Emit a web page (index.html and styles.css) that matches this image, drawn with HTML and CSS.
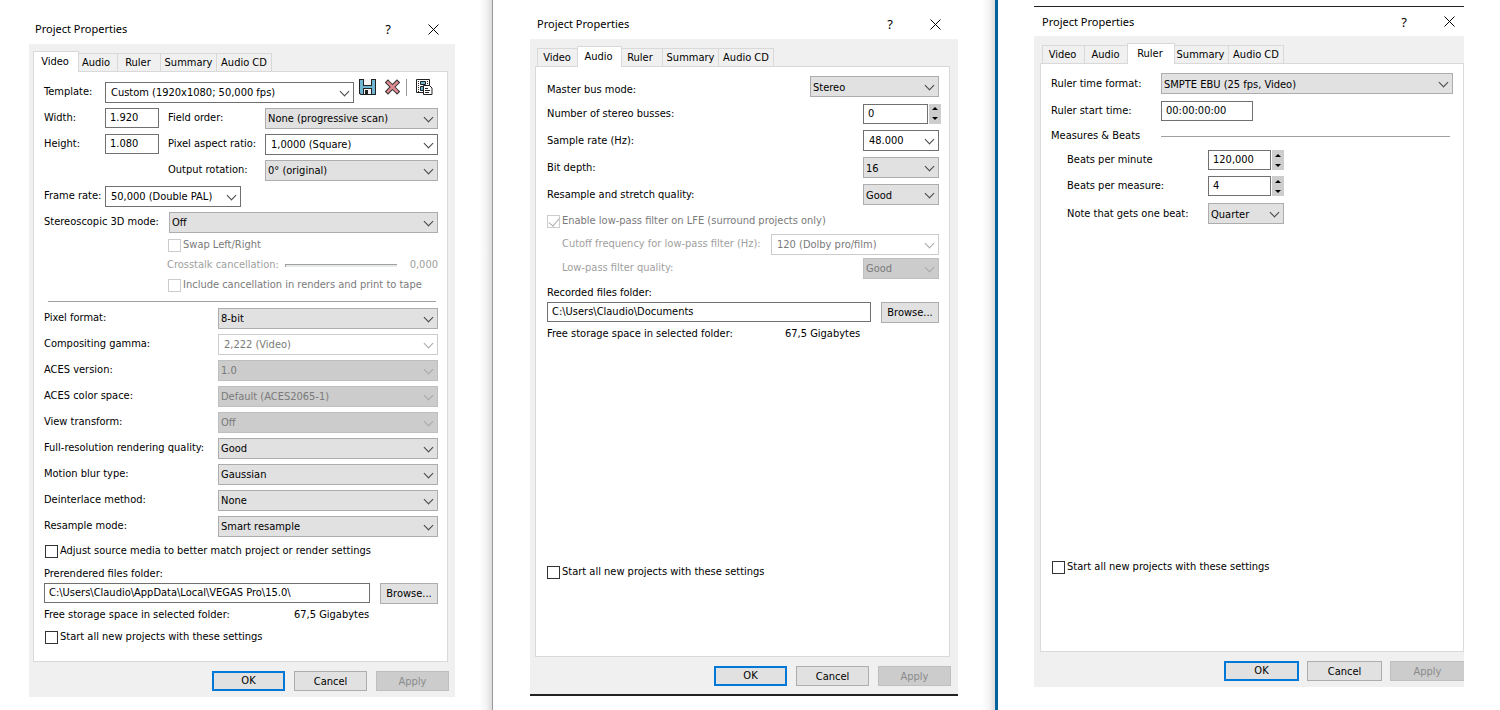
FILE: index.html
```html
<!DOCTYPE html>
<html lang="en">
<head>
<meta charset="utf-8">
<title>Project Properties</title>
<link rel="stylesheet" href="styles.css">
</head>
<body>
<main class="panes">

<section class="pane pane--video">
  <div class="dialog" role="dialog" aria-labelledby="title-video">
    <header class="titlebar">
      <h1 class="title" id="title-video">Project Properties</h1>
      <button class="title-button" type="button" aria-label="Help">?</button>
      <button class="title-button" type="button" aria-label="Close"><svg class="close" viewBox="0 0 11 11"><path d="M.5.5l10 10M10.5.5l-10 10"/></svg></button>
    </header>
    <form class="dialog-body">
      <div class="tabs" role="tablist">
        <button class="tab tab--video tab--active" type="button" role="tab" aria-selected="true">Video</button>
        <button class="tab tab--audio" type="button" role="tab">Audio</button>
        <button class="tab tab--ruler" type="button" role="tab">Ruler</button>
        <button class="tab tab--summary" type="button" role="tab">Summary</button>
        <button class="tab tab--cd" type="button" role="tab">Audio CD</button>
      </div>
      <div class="panel">
        <div class="row">
          <label class="lead" for="template">Template:</label>
          <span class="combo combo--edit grow"><select id="template"><option>Custom (1920x1080; 50,000 fps)</option></select></span>
          <span class="tools">
            <button class="tool" type="button" aria-label="Save template"><svg width="17" height="16" viewBox="0 0 17 16"><path fill="#222" d="M0 0h17v16H1.500L0 14.500z"/><path fill="#6fb5d3" d="M1 1h15v14H2l-1-1z"/><path fill="#222" d="M4 0h9v7H4zM4 9h9v7H4z"/><path fill="#f4f4f4" d="M5 0h7v6H5zM5 10h7v5H5z"/><path fill="#222" d="M6 11h3v4H6z"/></svg></button>
            <button class="tool" type="button" aria-label="Delete template"><svg width="15" height="16" viewBox="0 0 15 16"><path d="M3 3.500l9 9M12 3.500l-9 9" fill="none" stroke="#333" stroke-width="4.500" stroke-linecap="square"/><path d="M3 3.500l9 9M12 3.500l-9 9" fill="none" stroke="#dc8a90" stroke-width="2.500" stroke-linecap="square"/></svg></button>
            <span class="tool-divider"></span>
            <button class="tool" type="button" aria-label="Match media settings"><svg width="17" height="16" viewBox="0 0 17 16"><path fill="#fff" stroke="#222" d="M.5.5h13v13H.5z"/><path stroke="#222" stroke-dasharray="1 1" d="M2.500 2v11M11.500 2v4" fill="none"/><path fill="#6fb5d3" stroke="#222" d="M4.500 2.500h5v3h-5zM4.500 7.500h5v4h-5z"/><path fill="#fff" stroke="#222" d="M7.500 6.500h6l2.500 2.500v6.500H7.500z"/><path stroke="#222" d="M9 9.500h3M9 11.500h5M9 13.500h4" fill="none"/></svg></button>
          </span>
        </div>
        <div class="row">
          <label class="lead" for="width">Width:</label>
          <input class="field field--size" id="width" type="text" value="1.920">
          <label class="second" for="order">Field order:</label>
          <span class="combo grow"><select id="order"><option>None (progressive scan)</option></select></span>
        </div>
        <div class="row">
          <label class="lead" for="height">Height:</label>
          <input class="field field--size" id="height" type="text" value="1.080">
          <label class="second" for="aspect">Pixel aspect ratio:</label>
          <span class="combo combo--edit grow"><select id="aspect"><option>1,0000 (Square)</option></select></span>
        </div>
        <div class="row">
          <label class="second second--shift" for="rotation">Output rotation:</label>
          <span class="combo grow"><select id="rotation"><option>0° (original)</option></select></span>
        </div>
        <div class="row">
          <label class="lead" for="rate">Frame rate:</label>
          <span class="combo combo--edit combo--rate"><select id="rate"><option>50,000 (Double PAL)</option></select></span>
        </div>
        <div class="row">
          <label class="stereo" for="stereo">Stereoscopic 3D mode:</label>
          <span class="combo grow"><select id="stereo"><option>Off</option></select></span>
        </div>
        <div class="row row--tight indent"><label class="check check--off"><input type="checkbox" disabled>Swap Left/Right</label></div>
        <div class="row row--tight indent faint">
          <label class="crosstalk" for="crosstalk">Crosstalk cancellation:</label>
          <input class="slider" id="crosstalk" type="range" min="0" max="1" value="0" disabled>
          <output class="push" for="crosstalk">0,000</output>
        </div>
        <div class="row row--tight indent"><label class="check check--off"><input type="checkbox" disabled>Include cancellation in renders and print to tape</label></div>
        <hr class="rule">
        <div class="row"><label class="wide" for="pixel">Pixel format:</label><span class="combo grow"><select id="pixel"><option>8-bit</option></select></span></div>
        <div class="row"><label class="wide" for="gamma">Compositing gamma:</label><span class="combo combo--edit grow"><select id="gamma" disabled><option>2,222 (Video)</option></select></span></div>
        <div class="row"><label class="wide" for="aces">ACES version:</label><span class="combo grow"><select id="aces" disabled><option>1.0</option></select></span></div>
        <div class="row"><label class="wide" for="space">ACES color space:</label><span class="combo grow"><select id="space" disabled><option>Default (ACES2065-1)</option></select></span></div>
        <div class="row"><label class="wide" for="view">View transform:</label><span class="combo grow"><select id="view" disabled><option>Off</option></select></span></div>
        <div class="row"><label class="wide" for="quality">Full-resolution rendering quality:</label><span class="combo grow"><select id="quality"><option>Good</option></select></span></div>
        <div class="row"><label class="wide" for="blur">Motion blur type:</label><span class="combo grow"><select id="blur"><option>Gaussian</option></select></span></div>
        <div class="row"><label class="wide" for="deint">Deinterlace method:</label><span class="combo grow"><select id="deint"><option>None</option></select></span></div>
        <div class="row"><label class="wide" for="resample">Resample mode:</label><span class="combo grow"><select id="resample"><option>Smart resample</option></select></span></div>
        <div class="row row--note"><label class="check"><input type="checkbox">Adjust source media to better match project or render settings</label></div>
        <label class="folder-label" for="folder-video">Prerendered files folder:</label>
        <div class="row row--tight folder">
          <input class="field grow" id="folder-video" type="text" value="C:\Users\Claudio\AppData\Local\VEGAS Pro\15.0\">
          <button class="button button--browse" type="button">Browse...</button>
        </div>
        <p class="row row--note"><span class="free">Free storage space in selected folder:</span><span>67,5 Gigabytes</span></p>
        <div class="row row--tight"><label class="check"><input type="checkbox">Start all new projects with these settings</label></div>
      </div>
      <footer class="actions">
        <button class="button button--default" type="button">OK</button>
        <button class="button" type="button">Cancel</button>
        <button class="button" type="button" disabled>Apply</button>
      </footer>
    </form>
  </div>
</section>

<section class="pane pane--audio">
  <div class="dialog" role="dialog" aria-labelledby="title-audio">
    <header class="titlebar">
      <h1 class="title" id="title-audio">Project Properties</h1>
      <button class="title-button" type="button" aria-label="Help">?</button>
      <button class="title-button" type="button" aria-label="Close"><svg class="close" viewBox="0 0 11 11"><path d="M.5.5l10 10M10.5.5l-10 10"/></svg></button>
    </header>
    <form class="dialog-body">
      <div class="tabs" role="tablist">
        <button class="tab tab--video" type="button" role="tab">Video</button>
        <button class="tab tab--audio tab--active" type="button" role="tab" aria-selected="true">Audio</button>
        <button class="tab tab--ruler" type="button" role="tab">Ruler</button>
        <button class="tab tab--summary" type="button" role="tab">Summary</button>
        <button class="tab tab--cd" type="button" role="tab">Audio CD</button>
      </div>
      <div class="panel">
        <div class="row row--roomy"><label class="low" for="bus">Master bus mode:</label><span class="combo combo--bus push"><select id="bus"><option>Stereo</option></select></span></div>
        <div class="row row--roomy">
          <label for="busses">Number of stereo busses:</label>
          <span class="spin spin--out push"><input class="field" id="busses" type="text" value="0"><span class="spin-buttons"><button type="button" aria-label="Increase busses"></button><button type="button" aria-label="Decrease busses"></button></span></span>
        </div>
        <div class="row row--roomy"><label for="sample">Sample rate (Hz):</label><span class="combo combo--edit combo--short push"><select id="sample"><option>48.000</option></select></span></div>
        <div class="row row--roomy"><label for="depth">Bit depth:</label><span class="combo combo--short push"><select id="depth"><option>16</option></select></span></div>
        <div class="row row--roomy"><label for="stretch">Resample and stretch quality:</label><span class="combo combo--short push"><select id="stretch"><option>Good</option></select></span></div>
        <div class="row"><label class="check check--off"><input type="checkbox" checked disabled>Enable low-pass filter on LFE (surround projects only)</label></div>
        <div class="row row--tight sub faint"><label for="cutoff">Cutoff frequency for low-pass filter (Hz):</label><span class="combo combo--edit combo--cutoff push"><select id="cutoff" disabled><option>120 (Dolby pro/film)</option></select></span></div>
        <div class="row row--loose sub faint"><label for="lowpass">Low-pass filter quality:</label><span class="combo combo--short push"><select id="lowpass" disabled><option>Good</option></select></span></div>
        <label class="folder-label" for="folder-audio">Recorded files folder:</label>
        <div class="row row--tight folder">
          <input class="field grow" id="folder-audio" type="text" value="C:\Users\Claudio\Documents">
          <button class="button button--browse" type="button">Browse...</button>
        </div>
        <p class="row row--note"><span class="free free--narrow">Free storage space in selected folder:</span><span>67,5 Gigabytes</span></p>
        <div class="row row--note bottom"><label class="check"><input type="checkbox">Start all new projects with these settings</label></div>
      </div>
      <footer class="actions">
        <button class="button button--default" type="button">OK</button>
        <button class="button" type="button">Cancel</button>
        <button class="button" type="button" disabled>Apply</button>
      </footer>
    </form>
  </div>
</section>

<section class="pane pane--ruler">
  <div class="dialog" role="dialog" aria-labelledby="title-ruler">
    <header class="titlebar">
      <h1 class="title" id="title-ruler">Project Properties</h1>
      <button class="title-button" type="button" aria-label="Help">?</button>
      <button class="title-button" type="button" aria-label="Close"><svg class="close" viewBox="0 0 11 11"><path d="M.5.5l10 10M10.5.5l-10 10"/></svg></button>
    </header>
    <form class="dialog-body">
      <div class="tabs" role="tablist">
        <button class="tab tab--video" type="button" role="tab">Video</button>
        <button class="tab tab--audio" type="button" role="tab">Audio</button>
        <button class="tab tab--ruler tab--active" type="button" role="tab" aria-selected="true">Ruler</button>
        <button class="tab tab--summary" type="button" role="tab">Summary</button>
        <button class="tab tab--cd" type="button" role="tab">Audio CD</button>
      </div>
      <div class="panel">
        <div class="row row--roomy"><label class="format" for="format">Ruler time format:</label><span class="combo grow"><select id="format"><option>SMPTE EBU (25 fps, Video)</option></select></span></div>
        <div class="row row--roomy"><label class="format" for="start">Ruler start time:</label><input class="field field--time" id="start" type="text" value="00:00:00:00"></div>
        <h2 class="row row--note group"><span class="format">Measures &amp; Beats</span></h2>
        <div class="row row--note beat">
          <label class="beat-label" for="bpm">Beats per minute</label>
          <span class="spin"><input class="field" id="bpm" type="text" value="120,000"><span class="spin-buttons"><button type="button" aria-label="Increase tempo"></button><button type="button" aria-label="Decrease tempo"></button></span></span>
        </div>
        <div class="row row--loose beat">
          <label class="beat-label" for="measure">Beats per measure:</label>
          <span class="spin"><input class="field" id="measure" type="text" value="4"><span class="spin-buttons"><button type="button" aria-label="Increase beats"></button><button type="button" aria-label="Decrease beats"></button></span></span>
        </div>
        <div class="row row--roomy beat"><label class="beat-label" for="note">Note that gets one beat:</label><span class="combo combo--short"><select id="note"><option>Quarter</option></select></span></div>
        <div class="row row--note bottom"><label class="check"><input type="checkbox">Start all new projects with these settings</label></div>
      </div>
      <footer class="actions">
        <button class="button button--default" type="button">OK</button>
        <button class="button" type="button">Cancel</button>
        <button class="button" type="button" disabled>Apply</button>
      </footer>
    </form>
  </div>
</section>

</main>
</body>
</html>
```
FILE: styles.css
```css
* {
  box-sizing: border-box;
}

body {
  margin: 0;
  background: #fff;
  color: #000;
  font: 11px/14px "DejaVu Sans Condensed", "DejaVu Sans", sans-serif;
}

button,
input,
select {
  margin: 0;
  padding: 0;
  border: 0;
  border-radius: 0;
  background: none;
  color: inherit;
  font: inherit;
}

.panes {
  display: grid;
  grid-template-columns: 493fr 505fr 502fr;
  min-height: 100vh;
}

.pane {
  display: flex;
  flex-direction: column;
}

.pane--video {
  padding: 14px 37px 13px 29px;
  border-right: 1px solid #999;
  background: linear-gradient(to left, #dcdcdc, #f4f4f4 6px, #fff 13px);
}

.pane--audio {
  padding: 9px 37px 14px;
  border-right: 3px solid #00629e;
  background: linear-gradient(to left, #dcdcdc, #f4f4f4 6px, #fff 13px);
}

.pane--ruler {
  padding: 6px 36px 23px;
}

.dialog {
  display: flex;
  flex: 1;
  flex-direction: column;
  overflow: hidden;
  background: #fff;
}

.pane--audio .dialog {
  border-bottom: 2px solid #222;
}

.pane--ruler .dialog {
  border-top: 1px solid #222;
}

/* Title bar */
.titlebar {
  display: flex;
  align-items: center;
  height: 30px;
  padding: 0 11px 0 6px;
}

.pane--audio .titlebar {
  padding: 0 12px 0 7px;
}

.pane--ruler .titlebar {
  height: 29px;
  padding: 0 4px 0 8px;
}

.title {
  margin: 0 auto 0 0;
  font: 11px/14px "Noto Sans", "Open Sans", sans-serif;
}

.title-button {
  width: 22px;
  height: 22px;
  margin-left: 23px;
  font: 13px/22px "Noto Sans", "Open Sans", sans-serif;
  text-align: center;
}

.close {
  display: block;
  width: 11px;
  height: 11px;
  margin: auto;
  fill: none;
  stroke: #000;
}

/* Tabs and panel */
.dialog-body {
  display: flex;
  flex: 1;
  flex-direction: column;
  padding: 7px 7px 6px 4px;
  background: #f0f0f0;
}

.pane--audio .dialog-body {
  padding: 7px 8px 8px 5px;
}

.pane--ruler .dialog-body {
  padding: 7px 0 6px 6px;
}

.tabs {
  display: flex;
  align-items: flex-end;
  height: 20px;
  padding-left: 2px;
}

.tab {
  height: 18px;
  padding: 1px 2px 0 0;
  border: 1px solid #d9d9d9;
  border-width: 1px 1px 0 0;
  text-align: center;
  white-space: nowrap;
}

.tab:first-child {
  border-left-width: 1px;
}

.tab--video { width: 42px; }
.tab--audio { width: 41px; }
.tab--ruler { width: 43px; }
.tab--summary { width: 56px; padding-right: 0; }
.tab--cd { width: 55px; padding-right: 0; }

.pane--ruler .tab--video { width: 43px; }
.pane--ruler .tab--audio,
.pane--ruler .tab--ruler { width: 44px; }

.tab--active {
  z-index: 1;
  box-sizing: content-box;
  height: 20px;
  margin: 0 -2px -1px;
  padding: 0 2px 0 0;
  border-left-width: 1px;
  background: #fff;
}

.panel {
  display: flex;
  flex: 1;
  flex-direction: column;
  padding: 7px 9px 14px 10px;
  border: 1px solid #d9d9d9;
  background: #fff;
}

.pane--audio .panel,
.pane--ruler .panel {
  padding: 6px 10px 0 11px;
}

.pane--ruler .panel {
  padding-left: 10px;
}

.row {
  display: flex;
  align-items: center;
  height: 26px;
  margin: 0;
  font-size: 11px;
  font-weight: normal;
  white-space: nowrap;
}

.row--tight { height: 20px; }
.row--note { height: 24px; }
.row--roomy { height: 27px; }
.row--loose { height: 28px; }

.grow {
  flex: 1;
  min-width: 0;
}

.push { margin-left: auto; }
.indent { padding-left: 123px; }
.sub { padding-left: 15px; }
.beat { padding-left: 16px; }
.faint { color: #a0a0a0; }
.low { padding-top: 6px; }

.lead { width: 61px; }
.second { width: 97px; margin-left: 9px; }
.second--shift { margin-left: 124px; }
.stereo { width: 125px; }
.wide { width: 174px; }
.crosstalk { width: 118px; }
.format { width: 110px; }
.beat-label { width: 141px; }
.free { width: 250px; }
.free--narrow { width: 238px; }

.bottom {
  margin-top: auto;
  margin-bottom: 72px;
}

.rule {
  width: 388px;
  max-width: 100%;
  height: 1px;
  margin: 6px 0 3px 4px;
  border: 0;
  background: #a0a0a0;
}

.group::after {
  flex: 1;
  height: 1px;
  margin-right: 3px;
  background: #a0a0a0;
  content: "";
}

/* Drop-downs */
.combo {
  position: relative;
  display: block;
}

.combo select {
  display: block;
  width: 100%;
  height: 21px;
  padding: 2px 20px 0 2px;
  border: 1px solid #adadad;
  background: #e1e1e1;
  appearance: none;
}

.combo--edit select {
  padding-top: 1px;
  padding-left: 5px;
  border-color: #707070;
  background: #fff;
}

.combo::after {
  position: absolute;
  top: 6px;
  right: 6px;
  width: 6px;
  height: 6px;
  border: solid #444;
  border-width: 0 1px 1px 0;
  content: "";
  pointer-events: none;
  transform: rotate(45deg);
}

.combo select:disabled {
  border-color: #bfbfbf;
  background: #ccc;
  color: #7a7a7a;
  opacity: 1;
}

.combo--edit select:disabled {
  border-color: #ccc;
  background: #fff;
}

.combo:has(:disabled)::after {
  border-color: #a8a8a8;
}

.combo--rate { width: 136px; }
.combo--bus { width: 129px; }
.combo--short { width: 76px; }
.combo--cutoff { width: 168px; }

/* Text fields */
.field {
  height: 20px;
  padding: 0 5px 1px 4px;
  border: 1px solid #707070;
  background: #fff;
}

.field--size { width: 54px; }
.field--time { width: 92px; }

.spin {
  display: flex;
  gap: 1px;
}

.spin--out { margin-right: -2px; }
.spin .field { width: 65px; }
.beat .spin .field { width: 63px; }

.spin-buttons {
  display: flex;
  flex-direction: column;
  width: 12px;
  background: #cdcdcd;
}

.spin-buttons button {
  display: grid;
  flex: 1;
  place-items: center;
}

.spin-buttons button::before {
  border: solid transparent;
  border-width: 0 3px 3px;
  border-bottom-color: #000;
  content: "";
}

.spin-buttons button + button::before {
  border-width: 3px 3px 0;
  border-top-color: #000;
}

.folder-label {
  height: 16px;
  margin-top: 4px;
}

.folder { gap: 10px; }

/* Tick boxes and slider */
.check {
  display: flex;
  align-items: center;
  gap: 2px;
  margin-left: 1px;
}

.pane--audio .check { margin-left: 0; }

.check input {
  position: relative;
  width: 13px;
  height: 13px;
  border: 1px solid #333;
  background: #fff;
  appearance: none;
}

.check--off { color: #7a7a7a; }
.check--off input { border-color: #ccc; }

.check input:checked::after {
  position: absolute;
  top: 0;
  left: 3px;
  width: 5px;
  height: 9px;
  border: solid #aaa;
  border-width: 0 1px 1px 0;
  content: "";
  transform: rotate(40deg);
}

.slider {
  width: 112px;
  height: 3px;
  border: solid #a0a0a0;
  border-width: 1px 0 0 1px;
  background: #e7eaea;
  appearance: none;
}

.slider::-webkit-slider-thumb {
  width: 0;
  height: 0;
  appearance: none;
}

/* Buttons */
.tools {
  display: flex;
  align-self: flex-start;
  margin: 0 5px;
}

.tool {
  display: block;
  height: 16px;
}

.tool svg { display: block; }
.tool + .tool { margin-left: 9px; }

.tool-divider {
  width: 1px;
  height: 17px;
  margin: 0 9px 0 6px;
  background: #999;
}

.button {
  width: 73px;
  height: 20px;
  padding-top: 1px;
  border: 1px solid #adadad;
  background: #e1e1e1;
}

.button--default {
  padding: 0;
  border: 2px solid #0078d7;
}

.button--browse,
.pane--ruler .button--browse {
  width: 58px;
  height: 21px;
}

.button:disabled {
  border-color: #bfbfbf;
  background: #ccc;
  color: #8a8a8a;
}

.actions {
  display: flex;
  justify-content: flex-end;
  gap: 9px;
  margin-right: -1px;
  padding-top: 9px;
}

.pane--ruler .actions { gap: 8px; }
.pane--ruler .button { width: 75px; }
```
